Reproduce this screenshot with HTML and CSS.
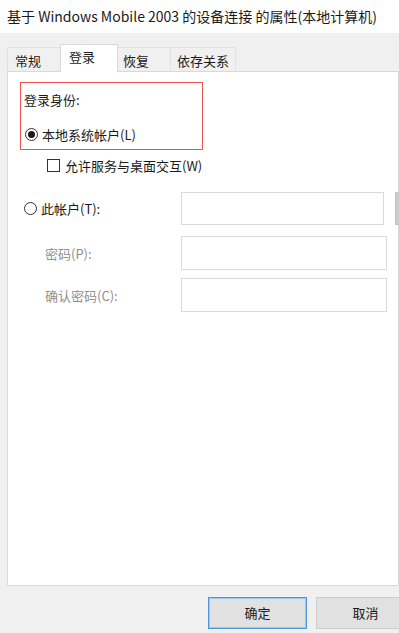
FILE: index.html
```html
<!DOCTYPE html>
<html lang="zh-CN">
<head>
<meta charset="utf-8">
<link rel="stylesheet" href="styles.css">
</head>
<body>
<div class="window">
  <div class="title">基于 Windows Mobile 2003 的设备连接 的属性(本地计算机)</div>
  <div class="tabs">
    <div class="tab t1">常规</div>
    <div class="tab t2 active">登录</div>
    <div class="tab t3">恢复</div>
    <div class="tab t4">依存关系</div>
  </div>
  <div class="panel">
    <div class="logon-box">
      <div class="heading">登录身份:</div>
      <div class="opt local">
        <span class="radio checked"></span>
        <span>本地系统帐户(L)</span>
      </div>
    </div>
    <div class="opt interact">
      <span class="check"></span>
      <span>允许服务与桌面交互(W)</span>
    </div>
    <div class="account">
      <div class="row r1">
        <div class="lbl opt"><span class="radio"></span><span>此帐户(T):</span></div>
        <div class="input w1"></div>
        <div class="browse"></div>
      </div>
      <div class="row r2">
        <div class="lbl dis">密码(P):</div>
        <div class="input w2"></div>
      </div>
      <div class="row r3">
        <div class="lbl dis">确认密码(C):</div>
        <div class="input w2"></div>
      </div>
    </div>
  </div>
  <div class="footer">
    <div class="btn ok">确定</div>
    <div class="btn">取消</div>
  </div>
</div>
</body>
</html>
```
FILE: styles.css
```css
* { box-sizing: border-box; }
html, body {
  margin: 0;
  padding: 0;
  width: 399px;
  height: 633px;
  overflow: hidden;
  background: #f0f0f0;
}
body {
  font-family: "Noto Sans CJK SC", "Noto Sans", sans-serif;
  font-size: 13px;
  color: #1a1a1a;
}
.window {
  width: 399px;
  height: 633px;
  display: flex;
  flex-direction: column;
  overflow: hidden;
}
.title {
  height: 33px;
  background: #ffffff;
  padding-left: 7px;
  line-height: 33px;
  font-size: 14px;
  white-space: nowrap;
}
.tabs {
  height: 38px;
  padding-left: 7px;
  display: flex;
  align-items: flex-end;
}
.tab {
  height: 24px;
  line-height: 23px;
  text-align: left;
  white-space: nowrap;
  border: 1px solid #e2e2e2;
  border-bottom: none;
  border-right: none;
  background: #f0f0f0;
  padding-top: 1px;
}
.t1 { width: 53px; padding-left: 7px; }
.t2 { width: 58px; padding-left: 8px; }
.t3 { width: 52px; padding-left: 5px; }
.t4 { width: 66px; padding-left: 6px; border-right: 1px solid #e2e2e2; }
.tab.active {
  height: 28px;
  background: #ffffff;
  border: 1px solid #d9d9d9;
  border-bottom: none;
  margin-bottom: -1px;
  position: relative;
  z-index: 1;
  line-height: 24px;
  padding-top: 0;
}
.tab.active + .tab { border-left: none; }
.panel {
  margin-left: 7px;
  width: 392px;
  height: 515px;
  background: #ffffff;
  border: 1px solid #d9d9d9;
  padding: 10px 0 0 12px;
}
.logon-box {
  width: 183px;
  height: 68px;
  border: 1px solid #ee5252;
  padding: 8px 0 0 3px;
}
.heading {
  line-height: 17px;
  height: 17px;
}
.opt {
  display: flex;
  align-items: center;
  gap: 4px;
  white-space: nowrap;
}
.local {
  margin-top: 18px;
  height: 17px;
  margin-left: 1px;
}
.radio {
  width: 13px;
  height: 13px;
  border: 1px solid #333333;
  border-radius: 50%;
  background: #ffffff;
  display: inline-flex;
  align-items: center;
  justify-content: center;
  flex: none;
}
.radio.checked::after {
  content: "";
  width: 7px;
  height: 7px;
  border-radius: 50%;
  background: #1a1a1a;
}
.interact {
  margin-top: 7px;
  margin-left: 27px;
  gap: 5px;
  height: 17px;
}
.check {
  width: 13px;
  height: 13px;
  border: 1px solid #333333;
  background: #ffffff;
  flex: none;
}
.account {
  margin-top: 18px;
  display: flex;
  flex-direction: column;
  gap: 11px;
}
.row {
  display: flex;
  align-items: center;
  height: 33px;
}
.r2, .r3 { height: 34px; }
.r3 { margin-top: -3px; }
.lbl {
  width: 161px;
  padding-left: 4px;
  flex: none;
}
.lbl.dis {
  color: #8f8f8f;
  padding-left: 25px;
}
.r1 .lbl { gap: 4px; }
.input {
  height: 100%;
  border: 1px solid #dadada;
  background: #ffffff;
  flex: none;
}
.w1 { width: 203px; }
.w2 { width: 206px; }
.browse {
  flex: none;
  width: 20px;
  height: 33px;
  margin-left: 11px;
  background: #cccccc;
  border: 1px solid #c4c4c4;
}
.footer {
  display: flex;
  gap: 9px;
  padding: 11px 0 0 208px;
}
.btn {
  flex: none;
  width: 99px;
  height: 32px;
  line-height: 30px;
  text-align: center;
  background: #e1e1e1;
  border: 1px solid #cccccc;
}
.btn.ok {
  border: 1px solid #4a96da;
  box-shadow: inset 0 0 0 1px #9fc8ee;
}
```
